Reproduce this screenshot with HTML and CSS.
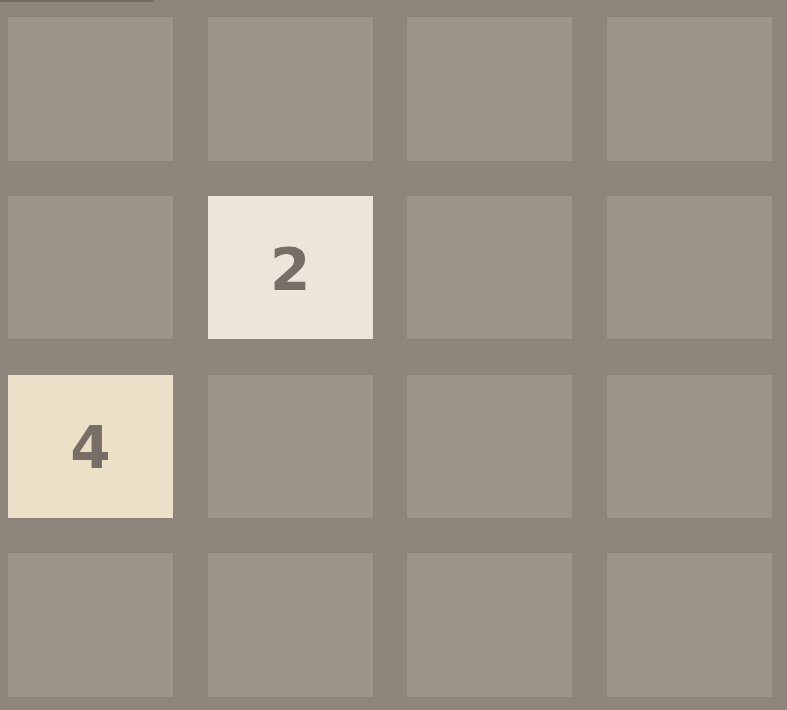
FILE: index.html
```html
<!DOCTYPE html>
<html lang="en">
<head>
    <meta charset="UTF-8">
    <meta name="viewport" content="width=device-width, initial-scale=1.0">
    <title>2048</title>
    <link rel="stylesheet" href="styles.css">
</head>
<body>
    <div class="top-bar"></div>

    <!-- Tablero 4x4 -->
    <div class="board">
        <div class="cell"></div>
        <div class="cell"></div>
        <div class="cell"></div>
        <div class="cell"></div>

        <div class="cell"></div>
        <div class="cell tile-2">2</div>
        <div class="cell"></div>
        <div class="cell"></div>

        <div class="cell tile-4">4</div>
        <div class="cell"></div>
        <div class="cell"></div>
        <div class="cell"></div>

        <div class="cell"></div>
        <div class="cell"></div>
        <div class="cell"></div>
        <div class="cell"></div>
    </div>
</body>
</html>
```

FILE: styles.css
```css
body {
    margin: 0;
    padding: 0;
    background-color: #8f857a;
    font-family: "DejaVu Sans", "Liberation Sans", sans-serif;
    height: 710px;
    overflow: hidden;
}

.top-bar {
    width: 154px;
    height: 2px;
    background-color: #72695f;
    border-radius: 0 2px 2px 0;
}

.board {
    display: grid;
    grid-template-columns: repeat(4, 165px);
    grid-template-rows: repeat(4, 143.5px);
    column-gap: 34.7px;
    row-gap: 35.3px;
    margin-top: 15px;
    padding-left: 8px;
}

.cell {
    background-color: #9e958a;
    box-shadow: 0 0 0 1px rgba(140, 130, 118, 0.6);
    display: flex;
    align-items: center;
    justify-content: center;
    box-sizing: border-box;
    padding-top: 4px;
    color: #776e65;
    font-size: 58px;
    font-weight: bold;
    line-height: 1;
}

.tile-2 {
    background-color: #ede4da;
}

.tile-4 {
    background-color: #ece0c8;
}
```
